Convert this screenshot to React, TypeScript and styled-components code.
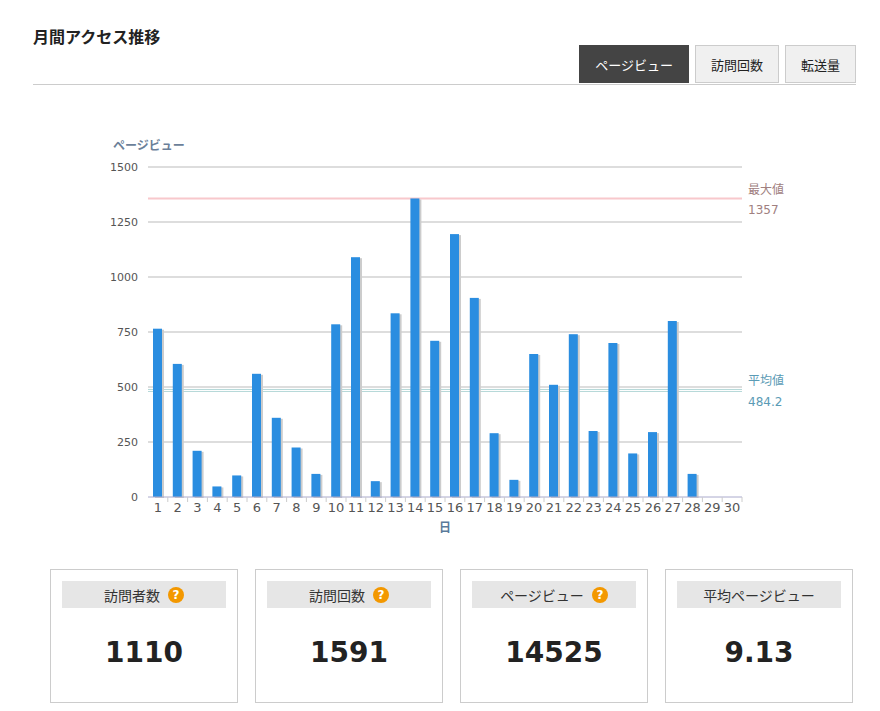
import styled, { createGlobalStyle } from 'styled-components'

const Global = createGlobalStyle`
  body { margin: 0; background: #fff; font-family: "Noto Sans CJK JP", "DejaVu Sans", sans-serif; }
`

const Page = styled.div`
  width: 823px;
  padding: 26px 0 0 33px;
`

const Title = styled.h2`
  margin: 0;
  font-size: 16px;
  line-height: 20px;
  font-weight: 700;
  color: #222;
`

const Tabs = styled.div`
  display: flex;
  justify-content: flex-end;
  gap: 6px;
  margin-top: -1px;
  border-bottom: 1px solid #ccc;
  padding-bottom: 1px;
`

const Tab = styled.button<{ $active?: boolean }>`
  height: 38px;
  padding: 0 15px;
  font-family: "Noto Sans CJK JP", sans-serif;
  font-size: 13px;
  border: 1px solid ${p => (p.$active ? '#444' : '#ccc')};
  background: ${p => (p.$active ? '#444' : '#f0f0f0')};
  color: ${p => (p.$active ? '#fff' : '#222')};
  cursor: pointer;
`

const ChartWrap = styled.div`
  margin-left: -33px;
  height: 460px;
`

const Cards = styled.div`
  display: grid;
  grid-template-columns: repeat(4, 188px);
  gap: 17px;
  padding-left: 17px;
  margin-top: 24px;
`

const Card = styled.div`
  height: 134px;
  border: 1px solid #ccc;
  padding: 11px 11px 0;
  box-sizing: border-box;
`

const CardHead = styled.div`
  height: 27px;
  background: #e6e6e6;
  display: flex;
  align-items: center;
  justify-content: center;
  gap: 8px;
  font-size: 14px;
  color: #333;
`

const Help = styled.span`
  width: 16px;
  height: 16px;
  border-radius: 50%;
  background: #f39800;
  color: #fff;
  font: bold 12px "DejaVu Sans", sans-serif;
  display: inline-flex;
  align-items: center;
  justify-content: center;
`

const Value = styled.div`
  text-align: center;
  margin-top: 28px;
  font: bold 28px "DejaVu Sans", sans-serif;
  color: #222;
`

const data = [765, 605, 210, 48, 98, 560, 360, 225, 105, 785, 1090, 72, 835, 1357, 710, 1195, 905, 290, 78, 650, 510, 740, 300, 700, 198, 295, 800, 105, 0, 0]

const Y0 = 397
const yOf = (v: number) => Y0 - v * 0.22
const X0 = 148
const SW = 19.8

function Chart() {
  return (
    <svg width={880} height={460} viewBox="0 100 880 460" fontFamily="'DejaVu Sans', sans-serif">
      <g transform="translate(0,115)">
        <text x={113} y={50} fontSize={12} fontWeight={700} fill="#6b7f99" fontFamily="'Noto Sans CJK JP', sans-serif">ページビュー</text>
        {[0, 250, 500, 750, 1000, 1250, 1500].map(v => (
          <g key={v}>
            {v > 0 && <line x1={X0} x2={742} y1={yOf(v)} y2={yOf(v)} stroke="#bbb" />}
            <text x={138} y={yOf(v) + 4} fontSize={11} fill="#555" textAnchor="end">{v}</text>
          </g>
        ))}
        <line x1={X0} x2={742} y1={yOf(484.2) - 1} y2={yOf(484.2) - 1} stroke="#b5d8d8" />
        <line x1={X0} x2={742} y1={yOf(484.2) + 1} y2={yOf(484.2) + 1} stroke="#b5d8d8" />
        <line x1={X0} x2={742} y1={yOf(1357)} y2={yOf(1357)} stroke="#f8c8cc" strokeWidth={2} />
        {data.map((v, i) => {
          const x = X0 + i * SW + 5
          return v > 0 ? (
            <g key={i}>
              <rect x={x + 2} y={yOf(v) + 1} width={9} height={v * 0.22} fill="#ccc" />
              <rect x={x} y={yOf(v)} width={9} height={v * 0.22} fill="#2a8de0" />
            </g>
          ) : null
        })}
        <line x1={X0} x2={742} y1={Y0} y2={Y0} stroke="#aac" />
        {data.map((_, i) => (
          <g key={i}>
            <line x1={X0 + (i + 1) * SW} x2={X0 + (i + 1) * SW} y1={Y0} y2={Y0 + 5} stroke="#ccc" />
            <text x={X0 + i * SW + SW / 2} y={Y0 + 15} fontSize={13} fill="#555" textAnchor="middle">{i + 1}</text>
          </g>
        ))}
        <text x={445} y={432} fontSize={12} fontWeight={700} fill="#5a7a9a" textAnchor="middle" fontFamily="'Noto Sans CJK JP', sans-serif">日</text>
        <text x={748} y={94} fontSize={12} fill="#a08080" fontFamily="'Noto Sans CJK JP', sans-serif">最大値</text>
        <text x={748} y={114} fontSize={12} fill="#a08080">1357</text>
        <text x={748} y={285} fontSize={12} fill="#5b9bb5" fontFamily="'Noto Sans CJK JP', sans-serif">平均値</text>
        <text x={748} y={306} fontSize={12} fill="#5b9bb5">484.2</text>
      </g>
    </svg>
  )
}

const stats = [
  { label: '訪問者数', value: '1110', help: true },
  { label: '訪問回数', value: '1591', help: true },
  { label: 'ページビュー', value: '14525', help: true },
  { label: '平均ページビュー', value: '9.13', help: false },
]

export default function App() {
  return (
    <Page>
      <Global />
      <Title>月間アクセス推移</Title>
      <Tabs>
        <Tab $active>ページビュー</Tab>
        <Tab>訪問回数</Tab>
        <Tab>転送量</Tab>
      </Tabs>
      <ChartWrap>
        <Chart />
      </ChartWrap>
      <Cards>
        {stats.map(s => (
          <Card key={s.label}>
            <CardHead>
              {s.label}
              {s.help && <Help>?</Help>}
            </CardHead>
            <Value>{s.value}</Value>
          </Card>
        ))}
      </Cards>
    </Page>
  )
}
